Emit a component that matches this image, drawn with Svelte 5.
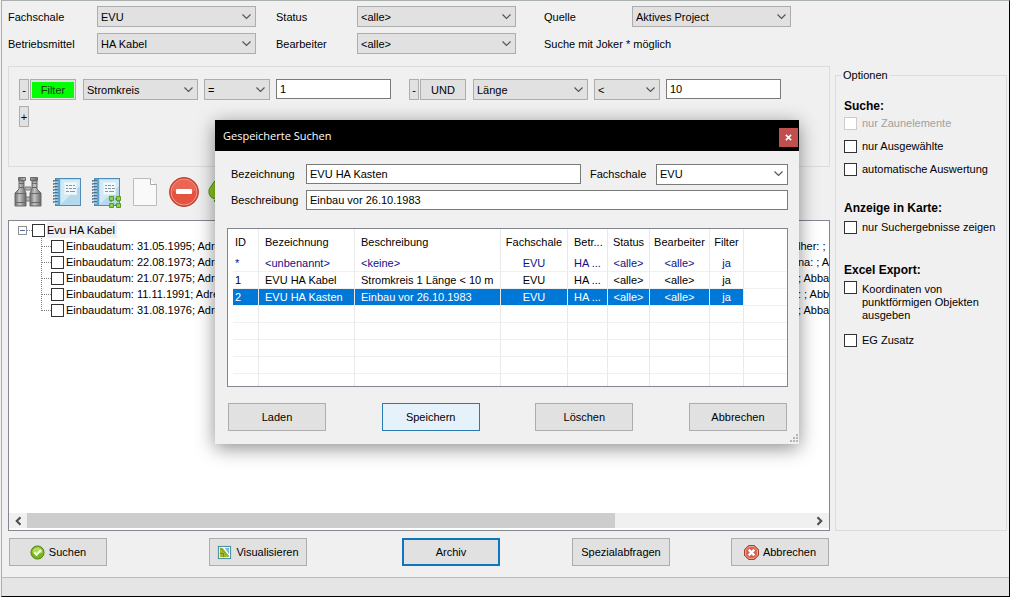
<script lang="ts">
  let fachschale = $state('EVU');
  let betriebsmittel = $state('HA Kabel');
  let status = $state('<alle>');
  let bearbeiter = $state('<alle>');
  let quelle = $state('Aktives Project');

  let filters = $state([
    { join: 'Filter', field: 'Stromkreis', op: '=', value: '1' },
    { join: 'UND', field: 'Länge', op: '<', value: '10' }
  ]);

  // the middle of each entry scrolls behind the dialog
  const nodes = [
    { text: 'Einbaudatum: 31.05.1995; Adre', tail: 'lher: ;' },
    { text: 'Einbaudatum: 22.08.1973; Adre', tail: 'na: ; A' },
    { text: 'Einbaudatum: 21.07.1975; Adre', tail: '; Abba' },
    { text: 'Einbaudatum: 11.11.1991; Adre', tail: ': ; Abb' },
    { text: 'Einbaudatum: 31.08.1976; Adre', tail: '; Abba' }
  ];

  const columns = ['ID', 'Bezeichnung', 'Beschreibung', 'Fachschale', 'Betr...', 'Status', 'Bearbeiter', 'Filter'];
  const searches = [
    ['*', '<unbenannt>', '<keine>', 'EVU', 'HA ...', '<alle>', '<alle>', 'ja'],
    ['1', 'EVU HA Kabel', 'Stromkreis 1 Länge < 10 m', 'EVU', 'HA ...', '<alle>', '<alle>', 'ja'],
    ['2', 'EVU HA Kasten', 'Einbau vor 26.10.1983', 'EVU', 'HA ...', '<alle>', '<alle>', 'ja']
  ];
  let selected = $state(2);
  let name = $state('EVU HA Kasten');
  let description = $state('Einbau vor 26.10.1983');
  let savedFachschale = $state('EVU');
</script>

{#snippet notebook()}
  <rect x="4.5" y="2.5" width="25" height="27" fill="#b5dbef" stroke="#4a8db8" />
  <path d="M5 3h4v26H5z" fill="#5ba6d0" />
  <path d="M10 4h19v24H10z" fill="#d3eaf6" />
  <path d="M10 28 29 10v18z" fill="#b4d9ec" />
  <rect x="13.5" y="6.5" width="12" height="12" fill="#f2f9fd" stroke="#e2f0f8" />
  <path d="M15 9.5h2m1 0h3m1 0h2M15 12.5h2m1 0h3m1 0h3M15 15.5h3m1 0h5" stroke="#8595a2" />
  <path d="M2 5h5M2 8h5M2 11h5M2 14h5M2 17h5M2 20h5M2 23h5M2 26h5" stroke="#44617a" stroke-width="1.3" />
  <path d="M3 6h4M3 9h4M3 12h4M3 15h4M3 18h4M3 21h4M3 24h4M3 27h4" stroke="#e4f1f8" />
{/snippet}

<div class="window">
  <div class="criteria">
    <div class="pair">
      <label for="fachschale">Fachschale</label>
      <select id="fachschale" bind:value={fachschale}><option>EVU</option></select>
      <label for="betriebsmittel">Betriebsmittel</label>
      <select id="betriebsmittel" bind:value={betriebsmittel}><option>HA Kabel</option></select>
    </div>
    <div class="pair middle">
      <label for="status">Status</label>
      <select id="status" bind:value={status}><option>&lt;alle&gt;</option></select>
      <label for="bearbeiter">Bearbeiter</label>
      <select id="bearbeiter" bind:value={bearbeiter}><option>&lt;alle&gt;</option></select>
    </div>
    <div class="pair last">
      <label for="quelle">Quelle</label>
      <select id="quelle" bind:value={quelle}><option>Aktives Project</option></select>
      <span class="hint">Suche mit Joker * möglich</span>
    </div>
  </div>

  <main>
    <div class="work">
      <section class="filters">
        <div class="filter-row">
          {#each filters as f, i}
            <div class="filter">
              <button type="button" class="tiny" aria-label="Bedingung entfernen">-</button>
              <button type="button" class="join" class:active={i === 0}><span>{f.join}</span></button>
              <select class="field" aria-label="Feld" bind:value={f.field}><option>{f.field}</option></select>
              <select class="op" aria-label="Operator" bind:value={f.op}><option>{f.op}</option></select>
              <input type="text" aria-label="Wert" bind:value={f.value} />
            </div>
          {/each}
        </div>
        <button type="button" class="tiny" aria-label="Bedingung hinzufügen">+</button>
      </section>

      <div class="toolbar">
        <button type="button" aria-label="Suchen">
          <svg viewBox="0 0 32 32">
            <defs>
              <linearGradient id="barrel">
                <stop offset="0" stop-color="#6a6a6a" />
                <stop offset=".4" stop-color="#c4c4c4" />
                <stop offset="1" stop-color="#666" />
              </linearGradient>
            </defs>
            <path d="M13 11h6v3h-6zM13 21h6v4h-6z" fill="#b5b5b5" stroke="#777" />
            <g fill="url(#barrel)" stroke="#6b6b6b">
              <path d="M7 5h5v8l2 4v13H3V17l4-4z" />
              <path d="M20 5h5v8l4 4v13H18V17l2-4z" />
              <path d="M6.5 1.5h7v3h-7zM18.5 1.5h7v3h-7z" />
            </g>
            <path d="M7 7.5h5M7 11.5h5M20 7.5h5M20 11.5h5M3 17.5h11M18 17.5h11M3 26.5h11M18 26.5h11" stroke="#686868" />
          </svg>
        </button>
        <button type="button" aria-label="Liste">
          <svg viewBox="0 0 32 32">{@render notebook()}</svg>
        </button>
        <button type="button" aria-label="Liste mit Auswahl">
          <svg viewBox="0 0 32 32">
            {@render notebook()}
            <path d="M21 23h7M21 29h7M21 23v6M28 23v6" stroke="#555" stroke-dasharray="1 1" />
            <path d="M19.5 20.5h4v4h-4zM26.5 20.5h4v4h-4zM19.5 27.5h4v4h-4zM26.5 27.5h4v4h-4z" fill="#8bd14e" stroke="#5a9a2c" />
          </svg>
        </button>
        <button type="button" aria-label="Neu">
          <svg viewBox="0 0 32 32">
            <path d="M4.5 2.5h17l6 6v21h-23z" fill="#f9f9f9" stroke="#bcbcbc" />
            <path d="M21.5 2.5v6h6" fill="#fff" stroke="#a8a8a8" />
          </svg>
        </button>
        <button type="button" aria-label="Entfernen">
          <svg viewBox="0 0 32 32">
            <circle cx="16" cy="16" r="14.5" fill="#d9402c" stroke="#b8402f" />
            <circle cx="16" cy="16" r="13" fill="#e4543f" stroke="#f0a092" />
            <path d="M4 15a12 12 0 0 1 24 0q-12 4-24 0z" fill="#ed7562" opacity=".6" />
            <rect x="8" y="13" width="16" height="5" rx="1" fill="#fff" />
          </svg>
        </button>
        <button type="button" aria-label="Aktualisieren">
          <svg viewBox="0 0 32 32">
            <path d="M5 9a12 12 0 0 1 22 1l-4 3a8 8 0 0 0-13 1l3 2-5 7q-7-2-6-9 1-3 3-5z" fill="#8cc71e" stroke="#4f8e14" />
            <path d="M27 19a12 12 0 0 1-20 6l3-3a8 8 0 0 0 12-3z" fill="#8cc71e" stroke="#4f8e14" />
          </svg>
        </button>
      </div>

      <section class="results">
        <div class="tree">
          <div class="root">
            <span class="expander" aria-hidden="true"></span>
            <span class="stub"></span>
            <label class="node"><input type="checkbox" /><span class="current">Evu HA Kabel</span></label>
          </div>
          <div class="children">
            {#each nodes as n}
              <div class="leaf">
                <span class="stub"></span>
                <label class="node"><input type="checkbox" />{n.text}</label>
                <span class="tail">{n.tail}</span>
              </div>
            {/each}
          </div>
        </div>
        <div class="scrollbar">
          <button type="button" aria-label="Nach links">
            <svg viewBox="0 0 8 8"><path d="M6 1 3 4l3 3" fill="none" stroke="#505050" stroke-width="1.7" /></svg>
          </button>
          <div class="track"><div class="thumb"></div></div>
          <button type="button" aria-label="Nach rechts">
            <svg viewBox="0 0 8 8"><path d="m2 1 3 3-3 3" fill="none" stroke="#505050" stroke-width="1.7" /></svg>
          </button>
        </div>
      </section>

      <div class="actions">
        <button type="button" class="btn">
          <svg viewBox="0 0 16 16">
            <circle cx="8" cy="8" r="7" fill="#7ab51d" stroke="#4f8112" />
            <path d="M2.5 8a5.5 5.5 0 0 1 11 0q-5 2-11 0z" fill="#b4dc5c" />
            <path d="m4.5 8 2.5 2.5 4.5-5" fill="none" stroke="#fff" stroke-width="2" />
          </svg>
          Suchen
        </button>
        <button type="button" class="btn">
          <svg viewBox="0 0 16 16">
            <rect x="1.5" y="1.5" width="13" height="13" fill="#fff" stroke="#3c8798" />
            <path d="M3 3h3l3 4 4 6H3z" fill="#a5b82b" />
            <path d="M8 3h5v7z" fill="#6fc0dc" />
            <path d="m3 3 10 9" stroke="#4f8f5a" stroke-width=".8" />
            <path d="M3 9h4v4" fill="none" stroke="#758617" />
          </svg>
          Visualisieren
        </button>
        <button type="button" class="btn focused">Archiv</button>
        <button type="button" class="btn">Spezialabfragen</button>
        <button type="button" class="btn">
          <svg viewBox="0 0 16 16">
            <path d="M5 .5h6L15.5 5v6L11 15.5H5L.5 11V5z" fill="#c9452f" stroke="#9f3a2a" />
            <path d="M5.3 1.7h5.4l3.6 3.6v5.4l-3.6 3.6H5.3l-3.6-3.6V5.3z" fill="#d8604c" stroke="#f0b5aa" />
            <path d="m5 5 6 6M11 5l-6 6" stroke="#fff" stroke-width="2.5" />
          </svg>
          Abbrechen
        </button>
      </div>
    </div>

    <fieldset class="options">
      <legend>Optionen</legend>
      <h2>Suche:</h2>
      <label class="disabled"><input type="checkbox" disabled />nur Zaunelemente</label>
      <label><input type="checkbox" />nur Ausgewählte</label>
      <label><input type="checkbox" />automatische Auswertung</label>
      <h2>Anzeige in Karte:</h2>
      <label><input type="checkbox" />nur Suchergebnisse zeigen</label>
      <h2 class="export">Excel Export:</h2>
      <label class="multiline"><input type="checkbox" /><span>Koordinaten von<br />punktförmigen Objekten<br />ausgeben</span></label>
      <label><input type="checkbox" />EG Zusatz</label>
    </fieldset>
  </main>

  <footer></footer>

  <div class="dialog" role="dialog" aria-labelledby="dialog-title">
    <header>
      <h1 id="dialog-title">Gespeicherte Suchen</h1>
      <button type="button" class="close" aria-label="Schließen">
        <svg viewBox="0 0 8 8"><path d="m1 1 6 6M7 1 1 7" stroke="#fff" stroke-width="1.7" /></svg>
      </button>
    </header>
    <div class="dialog-body">
      <div class="form-row">
        <label for="name">Bezeichnung</label>
        <input id="name" type="text" bind:value={name} />
        <label class="second" for="saved-fachschale">Fachschale</label>
        <select id="saved-fachschale" bind:value={savedFachschale}><option>EVU</option></select>
      </div>
      <div class="form-row">
        <label for="description">Beschreibung</label>
        <input id="description" type="text" bind:value={description} />
      </div>

      <div class="list">
        <table>
          <colgroup>
            <col class="c-id" /><col class="c-name" /><col class="c-desc" /><col class="c-fach" />
            <col class="c-betr" /><col class="c-status" /><col class="c-bearb" /><col class="c-filter" /><col />
          </colgroup>
          <thead>
            <tr>
              {#each columns as c}<th scope="col">{c}</th>{/each}
              <td></td>
            </tr>
          </thead>
          <tbody>
            {#each searches as row, i}
              <tr class:unnamed={i === 0} class:selected={i === selected} onclick={() => (selected = i)}>
                {#each row as cell}<td>{cell}</td>{/each}
                <td></td>
              </tr>
            {/each}
            {#each { length: 5 } as _}
              <tr class="empty">
                {#each columns as _c}<td></td>{/each}
                <td></td>
              </tr>
            {/each}
          </tbody>
        </table>
      </div>

      <div class="dialog-actions">
        <button type="button" class="btn">Laden</button>
        <button type="button" class="btn hot">Speichern</button>
        <button type="button" class="btn">Löschen</button>
        <button type="button" class="btn">Abbrechen</button>
      </div>
    </div>
    <svg class="grip" viewBox="0 0 9 9" aria-hidden="true">
      <path d="M7 1h2M4 4h2M7 4h2M1 7h2M4 7h2M7 7h2" stroke="#b5b5b5" stroke-width="2" />
    </svg>
  </div>
</div>

<style>
  :global(body) {
    margin: 0;
    background: #f0f0f0;
  }

  .window {
    box-sizing: border-box;
    position: relative;
    display: flex;
    flex-direction: column;
    min-height: 100vh;
    margin-left: 1px;
    padding: 4px 0 0 5px;
    border: 1px solid #a9b0ad;
    border-right-color: #000;
    border-bottom-color: #000;
    background: #f0f0f0;
    color: #000;
    font-family: 'Liberation Sans', Arial, sans-serif;
    font-size: 11px;
    line-height: 16px;
  }

  button,
  input,
  select {
    box-sizing: border-box;
    margin: 0;
    font: inherit;
    color: inherit;
  }
  button {
    padding: 0;
    border: 1px solid #adadad;
    background: #e1e1e1;
  }
  input[type='text'] {
    height: 20px;
    padding: 0 3px;
    border: 1px solid #7a7a7a;
    background: #fff;
    outline: none;
  }
  input[type='checkbox'] {
    appearance: none;
    flex: none;
    width: 13px;
    height: 13px;
    border: 1px solid #333;
    background: #fff;
  }
  input[type='checkbox']:checked {
    background: #0078d7;
  }
  input[type='checkbox']:disabled {
    border-color: #ccc;
  }
  select {
    appearance: none;
    height: 21px;
    padding: 0 18px 0 3px;
    border: 1px solid #adadad;
    border-radius: 0;
    background: #e1e1e1 url("data:image/svg+xml,%3Csvg xmlns='http://www.w3.org/2000/svg' width='9' height='6'%3E%3Cpath d='M.5.5l4 4 4-4' fill='none' stroke='%23555' stroke-width='1.2'/%3E%3C/svg%3E") no-repeat right 4px center;
  }

  .criteria {
    display: flex;
    padding: 1px;
  }
  .pair {
    display: grid;
    grid-template: 21px 21px / 89px 159px;
    row-gap: 6px;
    align-items: center;
  }
  .pair.middle {
    grid-template-columns: 81px 159px;
    margin-left: 20px;
  }
  .pair.last {
    grid-template-columns: 88px 159px;
    margin-left: 28px;
  }
  .hint {
    grid-column: span 2;
  }

  main {
    display: flex;
    flex: 1;
    gap: 5px;
    padding: 11px 2px 0 1px;
  }
  .work {
    display: flex;
    flex: 1;
    flex-direction: column;
    min-width: 0;
  }

  .filters {
    box-sizing: border-box;
    min-height: 101px;
    padding: 12px 10px;
    border: 1px solid #dcdcdc;
  }
  .filter-row {
    display: flex;
    gap: 18px;
    margin-bottom: 6px;
  }
  .filter {
    display: flex;
  }
  .tiny {
    width: 10px;
    height: 21px;
    line-height: 14px;
  }
  .join {
    width: 46px;
    height: 21px;
    margin: 0 7px 0 1px;
    padding: 1px;
  }
  .join span {
    display: block;
  }
  .join.active span {
    background: #0f0;
    color: #143c14;
  }
  .field {
    width: 115px;
  }
  .op {
    width: 66px;
    margin: 0 6px;
  }
  .filter input {
    width: 115px;
  }

  .toolbar {
    box-sizing: border-box;
    display: flex;
    height: 53px;
    align-items: center;
    padding-bottom: 4px;
  }
  .toolbar button {
    width: 39px;
    height: 32px;
    border: 0;
    background: none;
  }
  .toolbar svg {
    display: block;
    width: 32px;
    height: 32px;
    margin: auto;
  }

  .results {
    display: flex;
    flex: 1;
    flex-direction: column;
    padding: 1px 0 2px;
    border: 1px solid #828790;
    background: #fff;
  }
  .tree {
    flex: 1;
    white-space: nowrap;
  }
  .root,
  .leaf {
    display: flex;
    align-items: center;
    height: 16px;
  }
  .root {
    padding-left: 9px;
  }
  .expander {
    box-sizing: border-box;
    width: 9px;
    height: 9px;
    border: 1px solid #919191;
    background: linear-gradient(#4b63a7, #4b63a7) center / 5px 1px no-repeat;
  }
  .stub {
    width: 5px;
    border-top: 1px dotted #808080;
  }
  .node {
    display: flex;
    align-items: center;
    gap: 2px;
  }
  .current {
    padding-right: 2px;
    background: #f0f0f0;
  }
  .children {
    margin-left: 32px;
  }
  .leaf {
    background: repeating-linear-gradient(#808080 0 1px, #fff 1px 2px) no-repeat;
    background-size: 1px 100%;
  }
  .leaf:last-child {
    background-size: 1px 50%;
  }
  .leaf .stub {
    width: 10px;
  }
  .tail {
    width: 31px;
    margin-left: auto;
    overflow: hidden;
  }
  .scrollbar {
    display: flex;
    height: 15px;
    background: #f0f0f0;
  }
  .scrollbar button {
    width: 18px;
    border: 0;
    background: none;
  }
  .scrollbar svg {
    display: block;
    width: 10px;
    height: 10px;
    margin: auto;
  }
  .track {
    flex: 1;
  }
  .thumb {
    width: 75%;
    height: 100%;
    background: #cdcdcd;
  }

  .actions {
    display: grid;
    grid-template-columns: 200fr 193fr 170fr 159fr 98px;
    padding: 7px 1px 11px;
  }
  .btn {
    display: flex;
    align-items: center;
    justify-content: center;
    gap: 4px;
    width: 98px;
    height: 28px;
  }
  .btn svg {
    width: 15px;
    height: 15px;
  }
  .btn.focused {
    border: 2px solid #0f75bd;
  }
  .btn.hot {
    border-color: #2a7ab0;
    background: #e5f1fb;
  }

  .options {
    box-sizing: border-box;
    width: 172px;
    min-width: 0;
    margin: 1px 0 46px;
    padding: 0 8px;
    border: 1px solid #dcdcdc;
  }
  .options legend {
    margin-left: -3px;
    padding: 0 2px;
  }
  .options h2 {
    margin: 15px 0 1px;
    font-size: 12px;
    font-weight: bold;
    line-height: 16px;
  }
  .options h2 ~ h2 {
    margin: 23px 0 3px;
  }
  .options h2.export {
    margin-top: 27px;
  }
  .options label {
    display: flex;
    align-items: center;
    gap: 5px;
    margin-bottom: 7px;
    white-space: nowrap;
  }
  .options label.disabled {
    color: #a0a0a0;
  }
  .options label.multiline {
    align-items: flex-start;
    margin-bottom: 10px;
    line-height: 13px;
  }
  .multiline span {
    padding-top: 2px;
  }

  footer {
    height: 18px;
    margin-left: -5px;
    border-top: 1px solid #bcbcbc;
    background: #e5e5e5;
  }

  .dialog {
    position: absolute;
    top: 119px;
    left: 213px;
    width: 584px;
    background: #f0f0f0;
    box-shadow: 0 4px 18px rgba(0, 0, 0, 0.45);
  }
  .dialog header {
    display: flex;
    align-items: center;
    justify-content: space-between;
    height: 31px;
    padding: 0 1px 0 8px;
    background: #000;
    color: #fff;
  }
  .dialog h1 {
    margin: 0;
    font-family: 'Open Sans', 'Noto Sans', sans-serif;
    font-size: 11px;
    font-weight: normal;
  }
  .close {
    align-self: flex-end;
    width: 19px;
    height: 19px;
    margin-bottom: 4px;
    border: 0;
    background: #c05050;
  }
  .close svg {
    display: block;
    width: 7px;
    height: 7px;
    margin: auto;
  }
  .dialog-body {
    padding: 13px 11px 13px 12px;
  }
  .form-row {
    display: flex;
    align-items: center;
    height: 20px;
    margin-bottom: 6px;
    padding-left: 4px;
  }
  .form-row label {
    width: 75px;
  }
  .form-row label.second {
    width: 66px;
    margin-left: 9px;
  }
  .form-row input {
    flex: 1;
    min-width: 0;
  }
  .form-row select {
    width: 132px;
    border-color: #7a7a7a;
    background-color: #fff;
  }

  .list {
    margin: 18px 0 16px;
    padding-left: 5px;
    border: 1px solid #828790;
    background: #fff;
  }
  table {
    width: 100%;
    table-layout: fixed;
    border-collapse: separate;
    border-spacing: 0;
  }
  .c-id { width: 26px; }
  .c-name { width: 96px; }
  .c-desc { width: 146px; }
  .c-fach { width: 67px; }
  .c-betr { width: 40px; }
  .c-status { width: 42px; }
  .c-bearb { width: 60px; }
  .c-filter { width: 34px; }
  th,
  td {
    box-sizing: border-box;
    height: 17px;
    padding: 0 0 0 6px;
    border-right: 1px solid #e9e9e9;
    border-bottom: 1px solid #f0f0f0;
    font-weight: normal;
    line-height: 16px;
    text-align: left;
    white-space: nowrap;
  }
  thead th,
  thead td {
    height: 26px;
    border-bottom: 0;
  }
  th:first-child,
  td:first-child {
    padding-left: 2px;
  }
  th:last-child,
  td:last-child {
    border-right: 0;
  }
  th:nth-child(4),
  td:nth-child(4),
  th:nth-child(n + 6),
  td:nth-child(n + 6) {
    padding: 0;
    text-align: center;
  }
  .unnamed {
    color: #10108c;
  }
  .selected td:not(:last-child) {
    background: #0078d7;
    color: #fff;
  }
  .empty:last-child td {
    height: 12px;
    border-bottom: 0;
  }

  .dialog-actions {
    display: flex;
    justify-content: space-between;
    padding: 0 1px;
  }
  .grip {
    position: absolute;
    right: 1px;
    bottom: 1px;
    width: 9px;
    height: 9px;
  }
</style>
